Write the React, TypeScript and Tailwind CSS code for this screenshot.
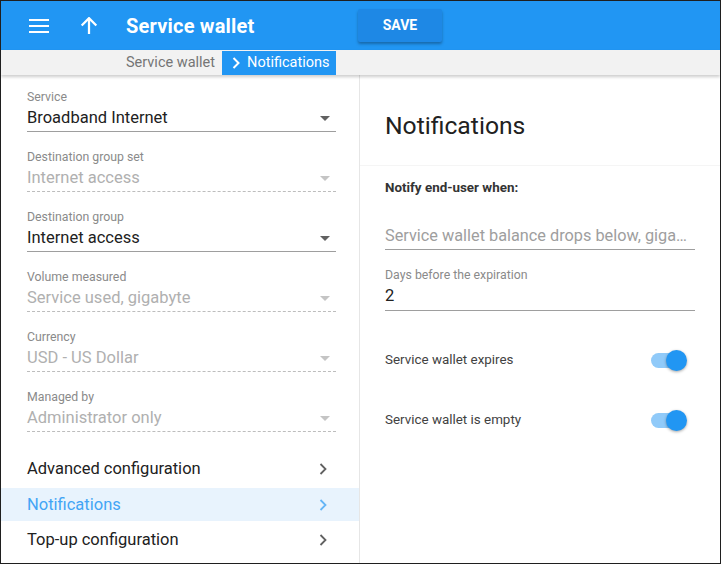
import React from "react";

function Caret({ disabled }: { disabled?: boolean }) {
  return (
    <svg width="10" height="5" viewBox="0 0 10 5" className="shrink-0">
      <path d="M0 0 L10 0 L5 5 Z" fill={disabled ? "#c4c4c4" : "#616161"} />
    </svg>
  );
}

function Chevron({ color }: { color: string }) {
  return (
    <svg width="8" height="12" viewBox="0 0 8 12" className="shrink-0">
      <path d="M1.5 1 L6.5 6 L1.5 11" fill="none" stroke={color} strokeWidth="1.8" />
    </svg>
  );
}

function Field({ label, value, disabled }: { label: string; value: string; disabled?: boolean }) {
  return (
    <div className="mb-[18px]">
      <div className="text-[12.3px] leading-[14px] text-[#8a8a8a]">{label}</div>
      <div
        className={
          "mt-[3px] flex items-center justify-between pb-[2px] pr-[6px] border-b " +
          (disabled ? "border-dashed border-[#bdbdbd]" : "border-[#9e9e9e]")
        }
      >
        <span
          className={
            "text-[16.5px] leading-[22px] " + (disabled ? "text-[#b0b0b0]" : "text-[#212121]")
          }
        >
          {value}
        </span>
        <Caret disabled={disabled} />
      </div>
    </div>
  );
}

function NavItem({ label, active, h }: { label: string; active?: boolean; h: string }) {
  return (
    <div
      className={
        h +
        " flex items-center justify-between pl-[26px] pr-[32px] " +
        (active ? "bg-[#e8f3fd]" : "")
      }
    >
      <span className={"text-[16.5px] " + (active ? "text-[#42a5f5]" : "text-[#212121]")}>
        {label}
      </span>
      <Chevron color={active ? "#64b5f6" : "#616161"} />
    </div>
  );
}

function Toggle() {
  return (
    <div className="relative w-[36px] h-[21px] mr-[8px] shrink-0">
      <div className="absolute left-0 top-[3px] w-[30px] h-[15px] rounded-full bg-[#90caf9]" />
      <div className="absolute right-0 top-0 w-[21px] h-[21px] rounded-full bg-[#2196f3] shadow-[0_1px_3px_rgba(0,0,0,0.35)]" />
    </div>
  );
}

export default function App() {
  return (
    <div className="w-[721px] h-[564px] box-border border border-[#1f1f1f] bg-white font-[Roboto,sans-serif] flex flex-col overflow-hidden">
      {/* Header */}
      <div className="h-[49px] bg-[#2196f3] flex items-center shrink-0">
        <div className="w-[20px] ml-[28px] flex flex-col gap-[4px]">
          <div className="h-[2px] bg-white" />
          <div className="h-[2px] bg-white" />
          <div className="h-[2px] bg-white" />
        </div>
        <svg width="18" height="18" viewBox="0 0 16 16" className="ml-[31px]">
          <path d="M8 1 L8 15 M1.5 7.5 L8 1 L14.5 7.5" fill="none" stroke="white" strokeWidth="2" />
        </svg>
        <div className="ml-[28px] w-[232px] text-white text-[20px] font-bold leading-none tracking-[0.2px]">
          Service wallet
        </div>
        <button className="w-[84px] h-[33px] rounded-[2px] bg-[#1e88e5] text-white text-[14px] font-bold shadow-[0_2px_3px_rgba(0,0,0,0.3)]">
          SAVE
        </button>
      </div>
      {/* Breadcrumb */}
      <div className="h-[25px] bg-[#f2f2f2] flex items-end shrink-0 shadow-[0_2px_3px_rgba(0,0,0,0.2)] relative z-10">
        <div className="h-[24px] flex items-center pl-[125px] text-[14.5px] text-[#757575]">Service wallet</div>
        <div className="ml-[7px] h-[24px] w-[114px] bg-[#2196f3] flex items-center pl-[10px] text-white text-[14.5px]">
          <svg width="8" height="12" viewBox="0 0 8 12" className="mr-[7px]">
            <path d="M1.5 1 L6.5 6 L1.5 11" fill="none" stroke="white" strokeWidth="2" />
          </svg>
          Notifications
        </div>
      </div>
      {/* Body */}
      <div className="flex flex-1 min-h-0">
        <div className="w-[358px] pt-[15px] shrink-0">
          <div className="pl-[26px] pr-[23px]">
            <Field label="Service" value="Broadband Internet" />
            <Field label="Destination group set" value="Internet access" disabled />
            <Field label="Destination group" value="Internet access" />
            <Field label="Volume measured" value="Service used, gigabyte" disabled />
            <Field label="Currency" value="USD - US Dollar" disabled />
            <Field label="Managed by" value="Administrator only" disabled />
          </div>
          <div className="mt-[20px]">
            <NavItem label="Advanced configuration" h="h-[36px] pb-[2px]" />
            <NavItem label="Notifications" active h="h-[33px] pt-[1px]" />
            <NavItem label="Top-up configuration" h="h-[35px] pt-[3px]" />
          </div>
        </div>
        <div className="w-px bg-[#e6e6e6] shrink-0" />
        <div className="flex-1 min-w-0 flex flex-col">
          <div className="h-[91px] border-b border-[#f5f5f5] pl-[25px] pt-[36px]">
            <div className="text-[24.7px] leading-[30px] text-[#212121]">Notifications</div>
          </div>
          <div className="pl-[25px] pr-[25px]">
            <div className="mt-[13px] text-[13.4px] leading-[18px] font-bold text-[#333333]">
              Notify end-user when:
            </div>
            <div className="mt-[28px] border-b border-[#9e9e9e] pb-[2px]">
              <div className="text-[16.3px] leading-[22px] text-[#9e9e9e] whitespace-nowrap">
                Service wallet balance drops below, giga…
              </div>
            </div>
            <div className="mt-[18px] text-[12.3px] leading-[14px] text-[#8a8a8a]">
              Days before the expiration
            </div>
            <div className="mt-[3px] border-b border-[#9e9e9e] pb-[3px]">
              <div className="text-[16.5px] leading-[22px] text-[#212121]">2</div>
            </div>
            <div className="mt-[39px] flex items-center justify-between h-[21px]">
              <span className="text-[13.4px] text-[#424242]">Service wallet expires</span>
              <Toggle />
            </div>
            <div className="mt-[39px] flex items-center justify-between h-[21px]">
              <span className="text-[13.4px] text-[#424242]">Service wallet is empty</span>
              <Toggle />
            </div>
          </div>
        </div>
      </div>
    </div>
  );
}
